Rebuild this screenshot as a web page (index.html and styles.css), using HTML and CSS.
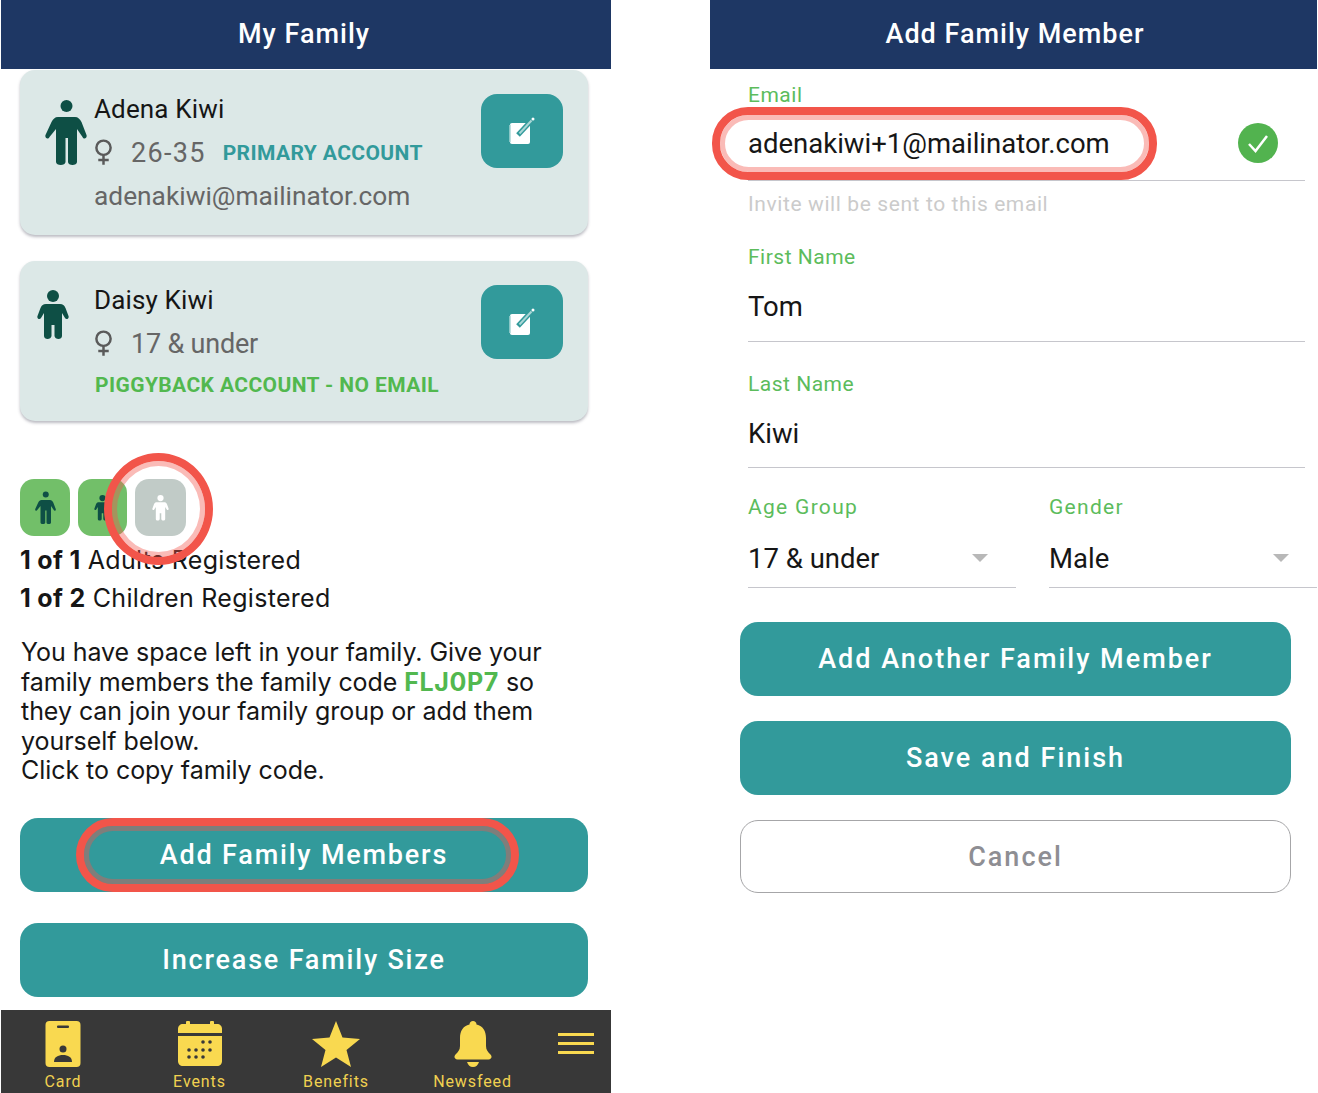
FILE: index.html
```html
<!DOCTYPE html>
<html lang="en">
<head>
<meta charset="utf-8">
<title>My Family</title>
<link rel="stylesheet" href="styles.css">
</head>
<body>
<svg class="defs" width="0" height="0" aria-hidden="true">
  <defs>
    <symbol id="adult" viewBox="0 0 42 66">
      <circle cx="21.500" cy="6" r="6"/>
      <path d="M13 17H30C33 17 35 19 36.500 22L41.500 35C42.500 38 39 40 37.500 37L32 29V62C32 66 23 66 23 62V38H20.500V62C20.500 66 11 66 11 62V29L4.500 37C3 40 -.5 38 .5 35L6.500 22C8 19 10 17 13 17z"/>
    </symbol>
    <symbol id="child" viewBox="0 0 32 50">
      <circle cx="16" cy="6" r="6"/>
      <path d="M9 14H23C26 14 27 15 28.500 18L31.500 26C32.500 29 29 30 28 28L25 23V46C25 50 18 50 17.500 46V35H14.500V46C14 50 7 50 7 46V23L4 28C3 30 -.5 29 .5 26L3.500 18C5 15 6 14 9 14z"/>
    </symbol>
    <symbol id="female" viewBox="0 0 20 28">
      <circle cx="10" cy="9" r="7.500" fill="none" stroke="currentColor" stroke-width="2.600"/>
      <path d="M10 16.500V27M4.500 22h11" fill="none" stroke="currentColor" stroke-width="2.600"/>
    </symbol>
    <symbol id="edit" viewBox="0 0 26 28">
      <rect x="1" y="6" width="20" height="21" rx="2" fill="#fff"/>
      <path d="M1 8v17" stroke="#a9d6d6" stroke-width="1.500" fill="none"/>
      <path d="M9 18L22 4" stroke="#329a9b" stroke-width="5" fill="none"/>
      <path d="M10.500 16.500L22.500 3.500" stroke="#a9d6d6" stroke-width="2" fill="none"/>
      <circle cx="24" cy="2" r="1.500" fill="#fff"/>
    </symbol>
  </defs>
</svg>

<main class="canvas">
  <section class="phone phone-left">
    <header class="topbar topbar-left">My Family</header>

    <div class="left-body">
      <article class="card">
        <svg class="fig fig-adult"><use href="#adult"/></svg>
        <div class="card-text">
          <div class="name">Adena Kiwi</div>
          <div class="age-row">
            <svg class="female"><use href="#female"/></svg>
            <span class="age age-range">26-35</span>
            <span class="tag tag-teal">PRIMARY ACCOUNT</span>
          </div>
          <div class="mail">adenakiwi@mailinator.com</div>
        </div>
        <button class="edit-btn" aria-label="Edit"><svg class="edit"><use href="#edit"/></svg></button>
      </article>

      <article class="card card-second">
        <svg class="fig fig-child"><use href="#child"/></svg>
        <div class="card-text">
          <div class="name">Daisy Kiwi</div>
          <div class="age-row">
            <svg class="female"><use href="#female"/></svg>
            <span class="age">17 &amp; under</span>
          </div>
          <div class="tag tag-green tag-line">PIGGYBACK ACCOUNT - NO EMAIL</div>
        </div>
        <button class="edit-btn" aria-label="Edit"><svg class="edit"><use href="#edit"/></svg></button>
      </article>

      <div class="tiles">
        <div class="tile tile-on"><svg class="tile-adult"><use href="#adult"/></svg></div>
        <div class="tile tile-on"><svg class="tile-child"><use href="#child"/></svg></div>
        <div class="tile tile-off"><svg class="tile-child"><use href="#child"/></svg></div>
      </div>

      <p class="count"><b>1 of 1</b> Adults Registered</p>
      <p class="count"><b>1 of 2</b> Children Registered</p>

      <p class="info">You have space left in your family. Give your<br>family members the family code <b class="code">FLJ0P7</b> so<br>they can join your family group or add them<br>yourself below.<br>Click to copy family code.</p>

      <button class="btn btn-left btn-add">Add Family Members</button>
      <button class="btn btn-left btn-inc">Increase Family Size</button>
    </div>

    <nav class="nav">
      <div class="nav-item">
        <svg class="nav-icon" width="36" height="46" viewBox="0 0 36 46">
          <rect x="0.500" y="0" width="35" height="46" rx="4" fill="#f9d950"/>
          <rect x="12" y="4.500" width="12" height="2.500" rx="1" fill="#383838"/>
          <circle cx="18" cy="28" r="3.500" fill="#383838"/>
          <path d="M9 41c0-5 4-7 9-7s9 2 9 7z" fill="#383838"/>
        </svg>
        <span>Card</span>
      </div>
      <div class="nav-item">
        <svg class="nav-icon" width="46" height="46" viewBox="0 0 46 46">
          <rect x="9" y="0" width="4" height="6" rx="1" fill="#f9d950"/>
          <rect x="33" y="0" width="4" height="6" rx="1" fill="#f9d950"/>
          <path d="M1 12V8c0-3 2-5 5-5h34c3 0 5 2 5 5v4z" fill="#f9d950"/>
          <path d="M1 15h44v25c0 3-2 5-5 5H6c-3 0-5-2-5-5z" fill="#f9d950"/>
          <g fill="#383838">
            <circle cx="26" cy="21" r="1.800"/><circle cx="33" cy="21" r="1.800"/>
            <circle cx="12" cy="29" r="1.800"/><circle cx="19" cy="29" r="1.800"/><circle cx="26" cy="29" r="1.800"/><circle cx="33" cy="29" r="1.800"/>
            <circle cx="12" cy="36" r="1.800"/><circle cx="19" cy="36" r="1.800"/><circle cx="26" cy="36" r="1.800"/>
          </g>
        </svg>
        <span>Events</span>
      </div>
      <div class="nav-item">
        <svg class="nav-icon" width="48" height="46" viewBox="0 0 48 46">
          <path d="M24 0l6.500 16.500L48 18 34.500 29 39 46 24 36.500 9 46l4.500-17L0 18l17.500-1.500z" fill="#f9d950"/>
        </svg>
        <span>Benefits</span>
      </div>
      <div class="nav-item">
        <svg class="nav-icon" width="38" height="46" viewBox="0 0 38 46">
          <path d="M19 0c2 0 3.500 1.500 3.500 3.500C29 5 32 10 32 17v8c0 4 2 6 4.500 8.500 2 2 1 5-2 5h-31c-3 0-4-3-2-5C4 31 6 29 6 25v-8C6 10 9 5 15.500 3.500 15.500 1.500 17 0 19 0z" fill="#f9d950"/>
          <path d="M13 41h12c-1 3-3 5-6 5s-5-2-6-5z" fill="#f9d950"/>
        </svg>
        <span>Newsfeed</span>
      </div>
      <div class="burger"><i></i><i></i><i></i></div>
    </nav>

    <div class="mark mark-circle"></div>
    <div class="mark mark-add"></div>
  </section>

  <section class="phone phone-right">
    <header class="topbar topbar-right">Add Family Member</header>

    <form class="form">
      <div class="field field-email">
        <label class="label">Email</label>
        <div class="value value-email">
          <span>adenakiwi+1@mailinator.com</span>
          <svg class="check" width="40" height="40" viewBox="0 0 40 40">
            <circle cx="20" cy="20" r="20" fill="#52b34f"/>
            <path d="M11 21l6.500 7L29 13" fill="none" stroke="#fff" stroke-width="2.500"/>
          </svg>
        </div>
      </div>
      <div class="help">Invite will be sent to this email</div>

      <div class="field">
        <label class="label">First Name</label>
        <div class="value value-first">Tom</div>
      </div>

      <div class="field field-last">
        <label class="label">Last Name</label>
        <div class="value value-last">Kiwi</div>
      </div>

      <div class="select-row">
        <div class="field">
          <label class="label label-wide">Age Group</label>
          <div class="value value-select"><span>17 &amp; under</span><i class="arrow"></i></div>
        </div>
        <div class="field">
          <label class="label label-wide">Gender</label>
          <div class="value value-select"><span>Male</span><i class="arrow"></i></div>
        </div>
      </div>

      <div class="actions">
        <button type="button" class="btn">Add Another Family Member</button>
        <button type="button" class="btn">Save and Finish</button>
        <button type="button" class="btn btn-cancel">Cancel</button>
      </div>
    </form>

    <div class="mark mark-email"></div>
  </section>
</main>
</body>
</html>
```
FILE: styles.css
```css
* { box-sizing: border-box; }

html, body { margin: 0; padding: 0; background: #fff; }

body {
  font-family: Roboto, "Liberation Sans", sans-serif;
  color: #161616;
  height: 1093px;
  overflow: hidden;
}

.defs { position: absolute; }

.canvas {
  display: flex;
  gap: 99px;
  padding-left: 1px;
  height: 1093px;
}

.phone {
  position: relative;
  display: flex;
  flex-direction: column;
  height: 1093px;
}
.phone-left { width: 610px; }
.phone-right { width: 607px; }

.topbar {
  height: 69px;
  background: #1e3764;
  color: #fff;
  font-size: 27px;
  font-weight: 500;
  letter-spacing: 1px;
  line-height: 68px;
  text-align: center;
  flex: none;
}
.topbar-left { padding-right: 4px; }
.topbar-right { padding-left: 3px; }

.left-body {
  flex: 1;
  padding: 1px 23px 0 19px;
  display: flex;
  flex-direction: column;
}

.card {
  display: flex;
  align-items: flex-start;
  height: 165px;
  padding: 20px 25px 0 0;
  background: #dce8e7;
  border-radius: 15px;
  box-shadow: 0 2px 3px rgba(60, 60, 80, .35);
}
.card-second { height: 160px; margin-top: 26px; }

.fig { fill: #0e4f45; flex: none; }
.fig-adult { width: 42px; height: 66px; margin: 10px 8px 0 25px; }
.fig-child { width: 32px; height: 50px; margin: 9px 26px 0 17px; }

.card-text { flex: 1; margin-left: -1px; }

.name { font-size: 26px; letter-spacing: .15px; line-height: 38px; color: #161616; }

.age-row { display: flex; align-items: center; height: 48px; padding-top: 1px; }
.female { width: 19px; height: 27px; color: #5a5a5a; margin-right: 18px; }
.age { font-size: 27px; letter-spacing: -.2px; color: #666; margin-right: 17px; }
.age-range { letter-spacing: 1.300px; }

.tag { font-weight: 700; font-size: 21px; letter-spacing: .4px; }
.tag-teal { color: #329a9b; }
.tag-green { color: #52b84f; }
.tag-line { line-height: 36px; padding-left: 1px; }

.mail { font-size: 26.300px; line-height: 41px; color: #666; }

.edit-btn {
  flex: none;
  width: 82px;
  height: 74px;
  margin-top: 4px;
  padding: 0;
  border: 0;
  border-radius: 16px;
  background: #329a9b;
  display: flex;
  align-items: center;
  justify-content: center;
}
.edit { width: 26px; height: 28px; }

.tiles { display: flex; gap: 8px; margin-top: 58px; height: 57px; }
.tile {
  width: 50px;
  height: 57px;
  border-radius: 14px;
  display: flex;
  align-items: center;
  justify-content: center;
}
.tile-on { background: #72bf69; fill: #0e4f45; }
.tile-on + .tile-on { width: 49px; }
.tile-off { background: #c1cbc7; fill: #fff; width: 51px; }
.tile-adult { width: 21px; height: 34px; }
.tile-child { width: 17px; height: 26px; }

.count {
  margin: 0;
  font-family: Inter, Roboto, sans-serif;
  font-size: 25px;
  letter-spacing: .3px;
  line-height: 38px;
}
.count:first-of-type { margin-top: 5px; }
.count b { font-weight: 700; }

.info {
  margin: 21px 0 0;
  padding-left: 1px;
  font-family: Inter, Roboto, sans-serif;
  font-size: 25px;
  letter-spacing: -.05px;
  line-height: 29.600px;
}
.code { color: #52b84f; font-weight: 700; letter-spacing: .6px; }

.btn {
  display: block;
  width: 100%;
  height: 74px;
  padding: 0;
  border: 0;
  border-radius: 18px;
  background: #329a9b;
  color: #fff;
  font-family: inherit;
  font-size: 27px;
  font-weight: 500;
  letter-spacing: 2px;
  text-align: center;
}
.btn-left { letter-spacing: 1.800px; }
.btn-add { margin-top: 32px; }
.btn-inc { margin-top: 31px; }

.btn-cancel {
  height: 73px;
  background: #fff;
  border: 1.500px solid #a6a6a8;
  color: #8e8e93;
}

.nav {
  flex: none;
  display: flex;
  align-items: flex-start;
  gap: 12.500px;
  height: 83px;
  background: #383838;
}
.nav-item {
  width: 124px;
  height: 83px;
  display: flex;
  flex-direction: column;
  align-items: center;
  padding-top: 11px;
  color: #f0d150;
  font-size: 16px;
  letter-spacing: .9px;
}
.nav-item span { margin-top: 6px; line-height: 18px; }
.nav-icon { display: block; flex: none; }

.burger { margin: 23px 0 0 11px; width: 36px; display: flex; flex-direction: column; gap: 6px; }
.burger i { display: block; height: 3px; background: #f9d950; }

/* Form */
.form { padding: 13px 12px 0 38px; display: flex; flex-direction: column; }

.label { display: block; font-size: 21px; letter-spacing: .5px; line-height: 26px; color: #5cbc5c; }
.label-wide { letter-spacing: 1.300px; }

.value {
  font-size: 27.500px;
  color: #161616;
  border-bottom: 1.500px solid #c6c6cc;
}
.value-email {
  display: flex;
  align-items: center;
  justify-content: space-between;
  height: 73px;
  padding: 0 27px 2px 0;
}
.value-first { height: 72px; line-height: 74px; }
.value-last { height: 71px; line-height: 74px; }
.value-select {
  display: flex;
  align-items: center;
  justify-content: space-between;
  height: 68px;
  padding: 9px 28px 0 0;
}

.help { font-size: 21px; letter-spacing: .6px; line-height: 46px; color: #cbcbcb; margin-bottom: 17px; }

.field-last { margin-top: 29px; }

.select-row {
  display: grid;
  grid-template-columns: 268px 268px;
  gap: 33px;
  margin: 26px -12px 0 0;
}

.arrow {
  width: 0;
  height: 0;
  border-left: 8px solid transparent;
  border-right: 8px solid transparent;
  border-top: 8px solid #b8b8b8;
}

.actions {
  margin: 34px 14px 0 -8px;
  display: flex;
  flex-direction: column;
  gap: 25px;
}

/* Red annotation rings laid over the screenshot */
.mark {
  position: absolute;
  border: 8px solid #f2554a;
  pointer-events: none;
}
.mark::after {
  content: "";
  position: absolute;
  inset: 0;
  border: 5px solid rgba(242, 85, 74, .4);
  border-radius: inherit;
}
.mark-circle { left: 103px; top: 453px; width: 109px; height: 112px; border-radius: 50%; }
.mark-add { left: 75px; top: 818px; width: 443px; height: 74px; border-radius: 37px; }
.mark-email { left: 2px; top: 107px; width: 445px; height: 73px; border-radius: 36px; }
```
